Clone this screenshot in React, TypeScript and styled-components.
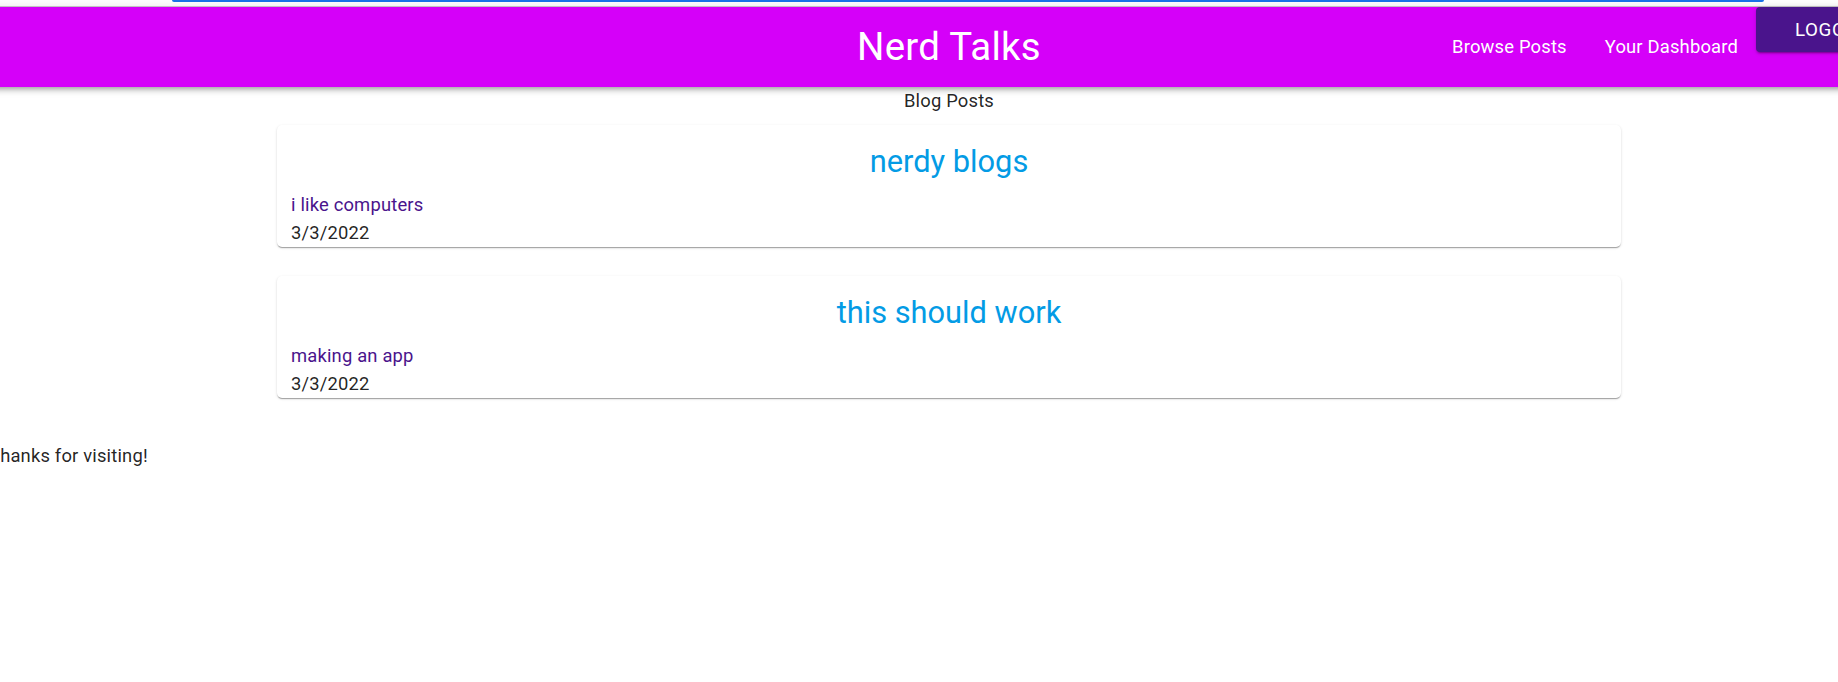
import React from "react";
import styled, { createGlobalStyle } from "styled-components";

const GlobalStyle = createGlobalStyle`
  html, body {
    margin: 0;
    padding: 0;
    background: #ffffff;
    overflow: hidden;
  }
  body {
    font-family: Roboto, "Noto Sans", "Liberation Sans", sans-serif;
    color: rgba(0, 0, 0, 0.87);
    -webkit-font-smoothing: antialiased;
  }
  * { box-sizing: border-box; }
`;

const Viewport = styled.div`
  width: 1838px;
  height: 682px;
  overflow: hidden;
  background: #ffffff;
`;

const BrowserEdge = styled.div`
  height: 7px;
  border-bottom: 1px solid #cfcfcf;
  background: #ffffff;
`;

const FocusRing = styled.div`
  margin-left: 172px;
  width: 1592px;
  height: 2px;
  background: #1a73e8;
  border-radius: 0 0 5px 5px;
`;

const Page = styled.div`
  width: 1920px;
  margin-left: -11px;
`;

const AppBar = styled.header`
  display: grid;
  grid-template-columns: 1fr auto 1fr;
  align-items: center;
  height: 80px;
  background: #d500f9;
  color: #ffffff;
  position: relative;
  z-index: 1;
  box-shadow: 0px 2px 4px -1px rgba(0, 0, 0, 0.2),
    0px 4px 5px 0px rgba(0, 0, 0, 0.14), 0px 1px 10px 0px rgba(0, 0, 0, 0.12);
`;

const Brand = styled.h1`
  margin: 0;
  font-size: 38.4px;
  font-weight: 400;
  line-height: 1.2;
  letter-spacing: 0.00735em;
  white-space: nowrap;
`;

const NavArea = styled.nav`
  display: flex;
  justify-content: flex-end;
  align-items: center;
  align-self: stretch;
`;

const NavLinks = styled.div`
  display: flex;
  align-items: center;
  gap: 38px;
  margin-right: 18px;
`;

const NavLink = styled.a`
  color: #ffffff;
  text-decoration: none;
  font-size: 18.4px;
  line-height: 1.5;
  letter-spacing: 0.00938em;
  white-space: nowrap;
  cursor: pointer;
`;

const LogoutButton = styled.button`
  align-self: flex-start;
  width: 153px;
  height: 45px;
  border: none;
  border-radius: 4px;
  background: #4a148c;
  color: #ffffff;
  font-family: Roboto, "Noto Sans", sans-serif;
  font-size: 18.8px;
  font-weight: 400;
  letter-spacing: 0.03em;
  text-transform: uppercase;
  cursor: pointer;
  box-shadow: 0px 3px 1px -2px rgba(0, 0, 0, 0.2),
    0px 2px 2px 0px rgba(0, 0, 0, 0.14), 0px 1px 5px 0px rgba(0, 0, 0, 0.12);
`;

const Main = styled.main`
  display: flex;
  flex-direction: column;
  align-items: center;
`;

const SectionLabel = styled.p`
  margin: 0;
  font-size: 18.4px;
  line-height: 28px;
  letter-spacing: 0.00938em;
  text-align: center;
`;

const PostList = styled.div`
  display: flex;
  flex-direction: column;
  align-items: center;
  gap: 29px;
  width: 100%;
  margin-top: 10px;
`;

const PostCard = styled.article`
  width: 70%;
  background: #ffffff;
  border-radius: 5px;
  padding: 16.5px 14px 0.5px;
  box-shadow: 0px 2px 1px -1px rgba(0, 0, 0, 0.2),
    0px 1px 1px 0px rgba(0, 0, 0, 0.14), 0px 1px 3px 0px rgba(0, 0, 0, 0.12);
`;

const PostTitle = styled.h2`
  margin: 0 0 9px;
  font-size: 30.8px;
  font-weight: 400;
  line-height: 40px;
  color: #039be5;
  text-align: center;
`;

const PostLine = styled.p<{ $tone: "accent" | "plain" }>`
  margin: 0;
  font-size: 18.4px;
  line-height: 28px;
  letter-spacing: 0.00938em;
  color: ${(p) => (p.$tone === "accent" ? "#4a148c" : "rgba(0, 0, 0, 0.87)")};
`;

const Footer = styled.footer`
  margin-top: 44px;
  font-size: 18.4px;
  line-height: 28px;
  letter-spacing: 0.00938em;
`;

const posts = [
  { id: 1, title: "nerdy blogs", body: "i like computers", date: "3/3/2022" },
  { id: 2, title: "this should work", body: "making an app", date: "3/3/2022" },
];

export default function App() {
  return (
    <>
      <GlobalStyle />
      <Viewport>
        <BrowserEdge>
          <FocusRing />
        </BrowserEdge>
        <Page>
          <AppBar>
            <span />
            <Brand>Nerd Talks</Brand>
            <NavArea>
              <NavLinks>
                <NavLink>Browse Posts</NavLink>
                <NavLink>Your Dashboard</NavLink>
              </NavLinks>
              <LogoutButton>Logout</LogoutButton>
            </NavArea>
          </AppBar>
          <Main>
            <SectionLabel>Blog Posts</SectionLabel>
            <PostList>
              {posts.map((post) => (
                <PostCard key={post.id}>
                  <PostTitle>{post.title}</PostTitle>
                  <PostLine $tone="accent">{post.body}</PostLine>
                  <PostLine $tone="plain">{post.date}</PostLine>
                </PostCard>
              ))}
            </PostList>
          </Main>
          <Footer>Thanks for visiting!</Footer>
        </Page>
      </Viewport>
    </>
  );
}
